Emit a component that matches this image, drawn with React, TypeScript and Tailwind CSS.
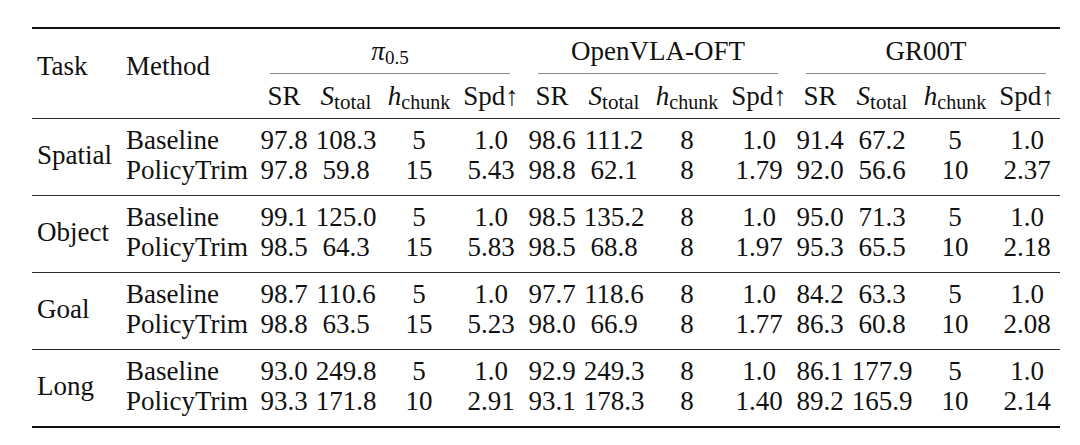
type Row = { method: string; cells: string[] };
type Block = { task: string; rows: Row[] };

const models = [
  { key: "pi", label: <><span className="italic">π</span><span className="text-[19px] align-[-4px]">0.5</span></> },
  { key: "ovla", label: "OpenVLA-OFT" },
  { key: "gr00t", label: "GR00T" },
];

const blocks: Block[] = [
  {
    task: "Spatial",
    rows: [
      { method: "Baseline", cells: ["97.8", "108.3", "5", "1.0", "98.6", "111.2", "8", "1.0", "91.4", "67.2", "5", "1.0"] },
      { method: "PolicyTrim", cells: ["97.8", "59.8", "15", "5.43", "98.8", "62.1", "8", "1.79", "92.0", "56.6", "10", "2.37"] },
    ],
  },
  {
    task: "Object",
    rows: [
      { method: "Baseline", cells: ["99.1", "125.0", "5", "1.0", "98.5", "135.2", "8", "1.0", "95.0", "71.3", "5", "1.0"] },
      { method: "PolicyTrim", cells: ["98.5", "64.3", "15", "5.83", "98.5", "68.8", "8", "1.97", "95.3", "65.5", "10", "2.18"] },
    ],
  },
  {
    task: "Goal",
    rows: [
      { method: "Baseline", cells: ["98.7", "110.6", "5", "1.0", "97.7", "118.6", "8", "1.0", "84.2", "63.3", "5", "1.0"] },
      { method: "PolicyTrim", cells: ["98.8", "63.5", "15", "5.23", "98.0", "66.9", "8", "1.77", "86.3", "60.8", "10", "2.08"] },
    ],
  },
  {
    task: "Long",
    rows: [
      { method: "Baseline", cells: ["93.0", "249.8", "5", "1.0", "92.9", "249.3", "8", "1.0", "86.1", "177.9", "5", "1.0"] },
      { method: "PolicyTrim", cells: ["93.3", "171.8", "10", "2.91", "93.1", "178.3", "8", "1.40", "89.2", "165.9", "10", "2.14"] },
    ],
  },
];

// widths of SR, S_total, h_chunk, Spd inside one model group (268px)
const colW = ["w-[56px]", "w-[68px]", "w-[78px]", "w-[66px]"];

function SubHeaders() {
  return (
    <div className="mt-[7px] flex h-[30px] leading-[30px]">
      <div className={`${colW[0]} text-center`}>SR</div>
      <div className={`${colW[1]} text-center whitespace-nowrap`}>
        <span className="italic">S</span>
        <span className="text-[21px] align-[-4px]">total</span>
      </div>
      <div className={`${colW[2]} text-center whitespace-nowrap`}>
        <span className="italic">h</span>
        <span className="text-[20px] align-[-4px]">chunk</span>
      </div>
      <div className={`${colW[3]} text-center whitespace-nowrap`}>Spd↑</div>
    </div>
  );
}

export default function App() {
  return (
    <div className="min-h-[445px] w-[1080px] bg-white pl-[32px] pt-[27px] text-[27px] text-[#111] [font-family:'Liberation_Serif','Times_New_Roman',serif]">
      <div className="w-[1028px] border-t-2 border-b-2 border-[#111]">
        {/* header */}
        <div className="flex h-[90px] border-b border-[#2a2a2a]">
          <div className="w-[89px] pl-[5px] pt-[22px] leading-[30px]">Task</div>
          <div className="w-[135px] pl-[5px] pt-[22px] leading-[30px]">Method</div>
          {models.map((m) => (
            <div key={m.key} className="flex w-[268px] flex-col">
              <div className="h-[37px] pt-[7px] text-center leading-[30px] whitespace-nowrap">{m.label}</div>
              <div className="mx-[14px] mt-[7px] h-px bg-[#888]" />
              <SubHeaders />
            </div>
          ))}
        </div>

        {/* body */}
        {blocks.map((b, bi) => (
          <div
            key={b.task}
            className={`flex pt-[6px] pb-[10px] ${bi < blocks.length - 1 ? "border-b border-[#2a2a2a]" : ""}`}
          >
            <div className="flex h-[60px] w-[89px] items-center pl-[5px] leading-[30px]">{b.task}</div>
            <div className="w-[135px] pl-[5px] leading-[30px]">
              {b.rows.map((r) => (
                <div key={r.method} className="h-[30px]">{r.method}</div>
              ))}
            </div>
            {[0, 1, 2].map((g) => (
              <div key={g} className="w-[268px] leading-[30px]">
                {b.rows.map((r) => (
                  <div key={r.method} className="flex h-[30px]">
                    {r.cells.slice(g * 4, g * 4 + 4).map((c, ci) => (
                      <div key={ci} className={`${colW[ci]} text-center`}>{c}</div>
                    ))}
                  </div>
                ))}
              </div>
            ))}
          </div>
        ))}
      </div>
    </div>
  );
}
